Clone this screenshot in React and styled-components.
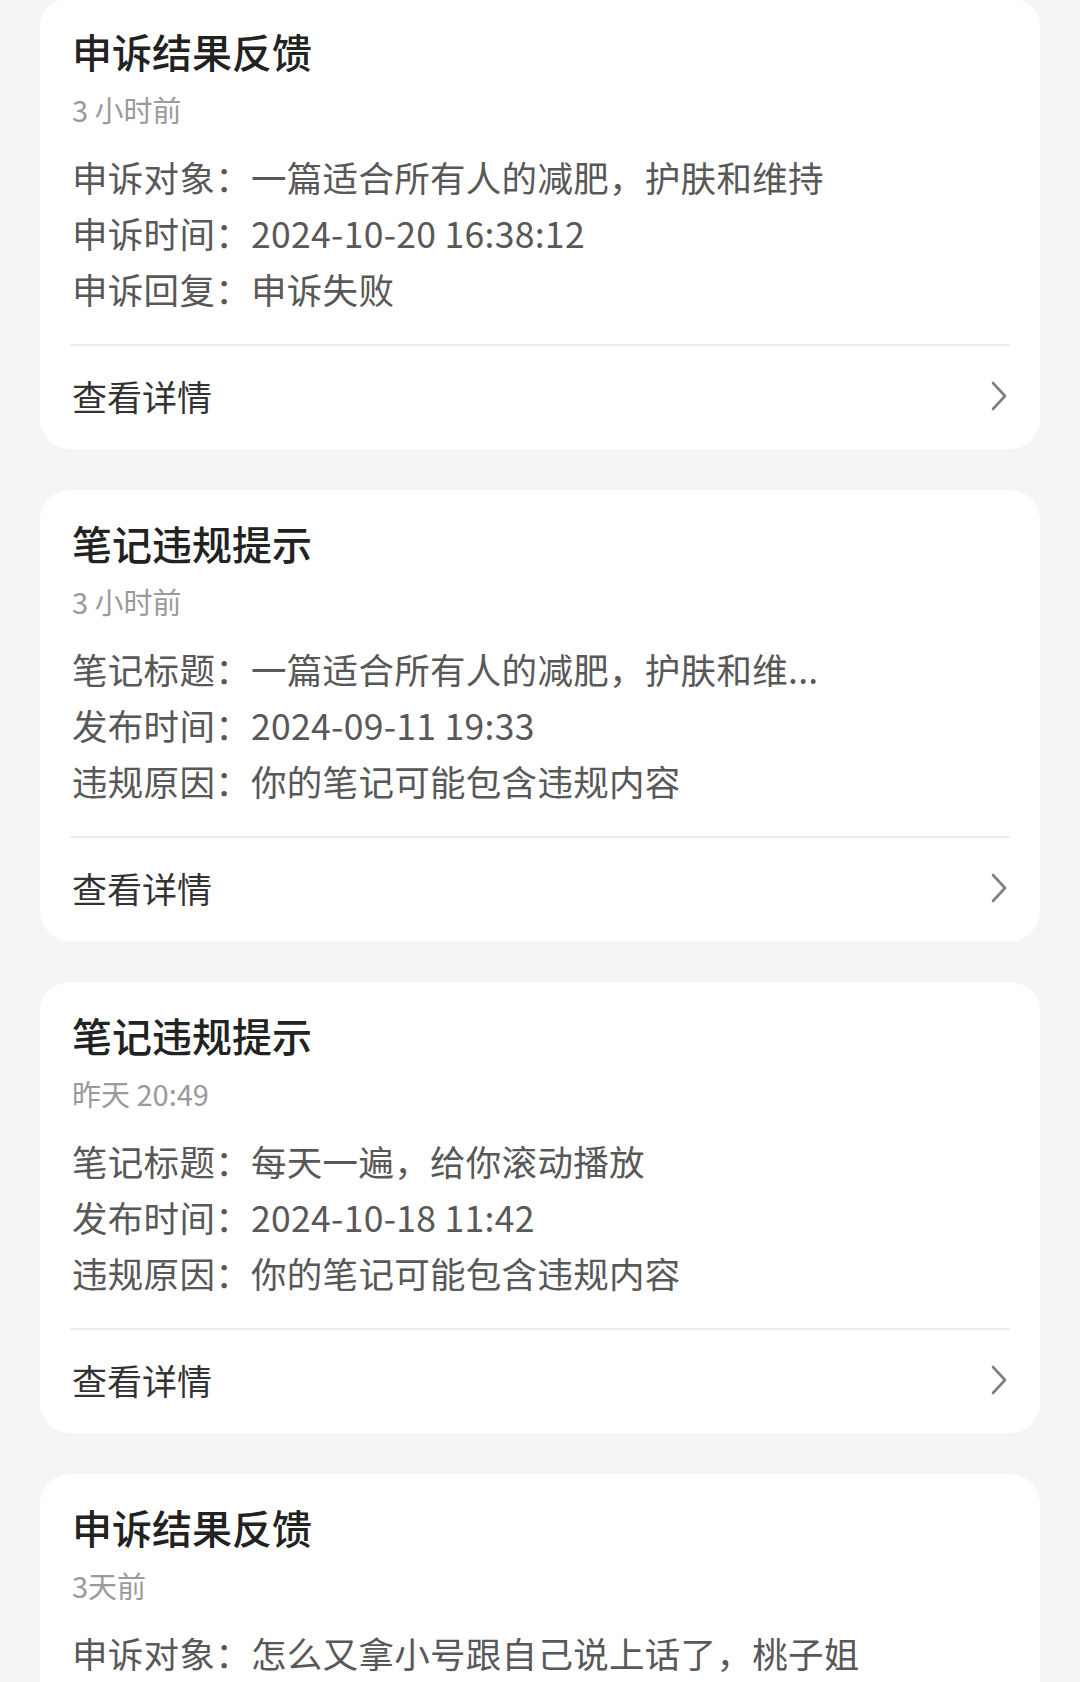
import { createGlobalStyle, styled } from "styled-components";

const notices = [
    {
        title: "申诉结果反馈",
        time: "3 小时前",
        rows: [
            ["申诉对象", "一篇适合所有人的减肥，护肤和维持"],
            ["申诉时间", "2024-10-20 16:38:12"],
            ["申诉回复", "申诉失败"],
        ],
    },
    {
        title: "笔记违规提示",
        time: "3 小时前",
        rows: [
            ["笔记标题", "一篇适合所有人的减肥，护肤和维..."],
            ["发布时间", "2024-09-11 19:33"],
            ["违规原因", "你的笔记可能包含违规内容"],
        ],
    },
    {
        title: "笔记违规提示",
        time: "昨天 20:49",
        rows: [
            ["笔记标题", "每天一遍，给你滚动播放"],
            ["发布时间", "2024-10-18 11:42"],
            ["违规原因", "你的笔记可能包含违规内容"],
        ],
    },
    {
        title: "申诉结果反馈",
        time: "3天前",
        rows: [
            ["申诉对象", "怎么又拿小号跟自己说上话了，桃子姐"],
            ["申诉时间", "2024-10-17 09:12:40"],
            ["申诉回复", "申诉失败"],
        ],
    },
];

const App = () => {
    return (
        <>
            <GlobalStyle />
            <Page>
                {notices.map((item, i) => (
                    <Card key={i}>
                        <Body>
                            <Title>{item.title}</Title>
                            <Time>{item.time}</Time>
                            <Info>
                                {item.rows.map(([label, value]) => (
                                    <Row key={label}>
                                        <span>{label}：</span>
                                        <span>{value}</span>
                                    </Row>
                                ))}
                            </Info>
                        </Body>
                        <Footer>
                            <span>查看详情</span>
                            <Chevron />
                        </Footer>
                    </Card>
                ))}
            </Page>
        </>
    );
};

const Chevron = () => (
    <svg width="18" height="30" viewBox="0 0 18 30" fill="none">
        <polyline points="3,2 15,15 3,28" stroke="#808080" strokeWidth="2.6" strokeLinecap="round" strokeLinejoin="round" />
    </svg>
);

const GlobalStyle = createGlobalStyle`
    html, body {
        margin: 0;
        padding: 0;
        background-color: #f5f5f5;
    }
    body {
        font-family: "Noto Sans CJK SC", "Noto Sans", sans-serif;
    }
`;

const Page = styled.div`
    width: 1080px;
    height: 1682px;
    overflow: hidden;
    box-sizing: border-box;
    padding: 0 40px;
    background-color: #f5f5f5;
    display: flex;
    flex-direction: column;
    gap: 41px;
    & > div:first-child {
        margin-top: -2px;
    }
`;

const Card = styled.div`
    flex-shrink: 0;
    background-color: #ffffff;
    border-radius: 30px;
    padding: 0 30px;
    box-sizing: border-box;
    height: 451px;
    display: flex;
    flex-direction: column;
`;

const Body = styled.div`
    padding: 26px 0 27px 2px;
    border-bottom: 2px solid #ececec;
`;

const Title = styled.div`
    font-size: 40px;
    line-height: 54px;
    font-weight: 500;
    color: #222222;
`;

const Time = styled.div`
    margin-top: 9px;
    font-size: 29px;
    line-height: 44px;
    color: #9a9a9a;
`;

const Info = styled.div`
    margin-top: 18px;
    display: flex;
    flex-direction: column;
`;

const Row = styled.div`
    font-size: 35.5px;
    line-height: 56px;
    letter-spacing: 0.3px;
    color: #585858;
    white-space: nowrap;
`;

const Footer = styled.div`
    flex: 1;
    display: flex;
    align-items: center;
    justify-content: space-between;
    padding: 0 2px 4px 2px;
    font-size: 35px;
    color: #333333;
`;

export default App;
